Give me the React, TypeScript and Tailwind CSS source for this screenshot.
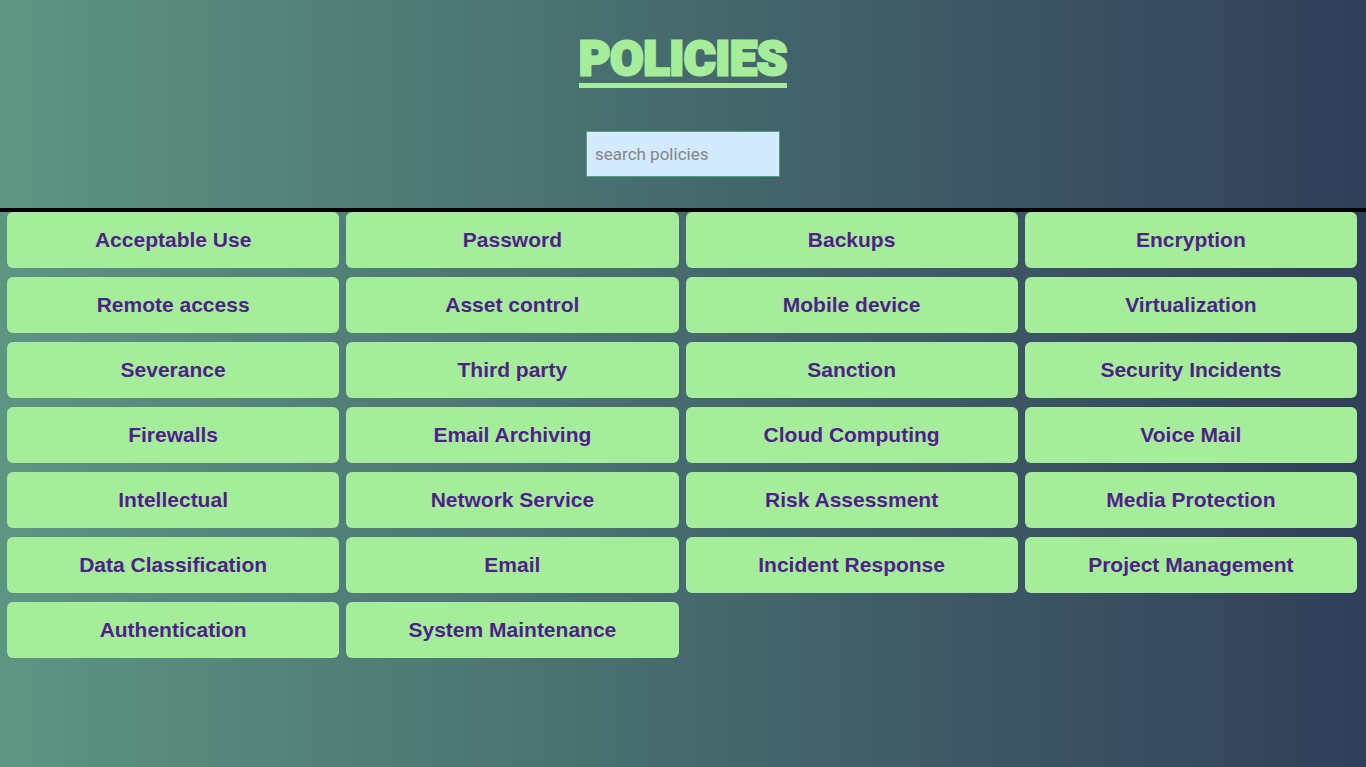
const policies: string[] = [
  'Acceptable Use', 'Password', 'Backups', 'Encryption',
  'Remote access', 'Asset control', 'Mobile device', 'Virtualization',
  'Severance', 'Third party', 'Sanction', 'Security Incidents',
  'Firewalls', 'Email Archiving', 'Cloud Computing', 'Voice Mail',
  'Intellectual', 'Network Service', 'Risk Assessment', 'Media Protection',
  'Data Classification', 'Email', 'Incident Response', 'Project Management',
  'Authentication', 'System Maintenance',
];

function PolicyLink({ name }: { name: string }) {
  return (
    <li>
      <a
        href="#"
        className="flex h-14 items-center justify-center rounded-md bg-[#a6ed9b] text-[21px] leading-8 font-bold text-[#4f1f8a]"
      >
        {name}
      </a>
    </li>
  );
}

export default function App() {
  return (
    <div className="min-h-screen bg-linear-to-r from-[#5d9583] via-[#466a6d] to-[#323f59] font-['Liberation_Sans',sans-serif]">
      <header className="flex flex-col items-center border-b-4 border-black pt-[35px] pb-[31px]">
        <h1 className="border-b-[5px] border-[#a6ed9b] font-['Roboto',sans-serif] text-5xl leading-[48px] font-black text-[#a6ed9b] [-webkit-text-stroke:3px_#a6ed9b]">
          POLICIES
        </h1>
        <input
          type="search"
          aria-label="search policies"
          placeholder="search policies"
          className="mt-[43px] h-[46px] w-[194px] border border-[#4fa578] bg-[#d4eaff] px-2 font-['Roboto',sans-serif] text-[17px] text-gray-800 placeholder:text-[#858585]"
        />
      </header>
      <main>
        <ul className="grid grid-cols-4 gap-x-[7px] gap-y-[9px] pr-[9px] pl-[7px]">
          {policies.map((name) => (
            <PolicyLink key={name} name={name} />
          ))}
        </ul>
      </main>
    </div>
  );
}
